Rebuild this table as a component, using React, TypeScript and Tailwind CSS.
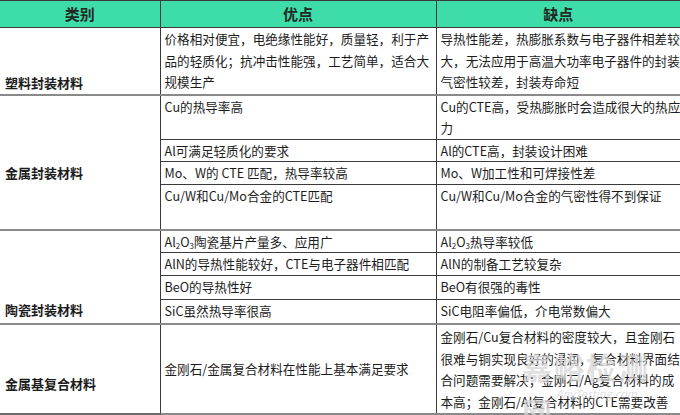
import type { ReactNode } from "react";

const FONT = { fontFamily: '"Noto Sans CJK SC", "Noto Sans", sans-serif' };

type Sub = { h: number; pro: ReactNode[]; con: ReactNode[]; mid?: boolean };
type Group = { label: string; pb: number; last?: boolean; rows: Sub[] };

const A2O3 = (
  <>
    Al<sub className="text-[8px]">2</sub>O<sub className="text-[8px]">3</sub>
  </>
);

const GROUPS: Group[] = [
  {
    label: "塑料封装材料",
    pb: 0,
    rows: [
      {
        h: 67,
        pro: ["价格相对便宜，电绝缘性能好，质量轻，利于产", "品的轻质化；抗冲击性能强，工艺简单，适合大", "规模生产"],
        con: ["导热性能差，热膨胀系数与电子器件相差较", "大，无法应用于高温大功率电子器件的封装", "气密性较差，封装寿命短"],
      },
    ],
  },
  {
    label: "金属封装材料",
    pb: 45,
    rows: [
      { h: 44, pro: ["Cu的热导率高"], con: ["Cu的CTE高，受热膨胀时会造成很大的热应", "力"] },
      { h: 22, pro: ["Al可满足轻质化的要求"], con: ["Al的CTE高，封装设计困难"] },
      { h: 23, pro: ["Mo、W的 CTE 匹配，热导率较高"], con: ["Mo、W加工性和可焊接性差"] },
      { h: 45, pro: ["Cu/W和Cu/Mo合金的CTE匹配"], con: ["Cu/W和Cu/Mo合金的气密性得不到保证"] },
    ],
  },
  {
    label: "陶瓷封装材料",
    pb: 3,
    rows: [
      { h: 22, pro: [<>{A2O3}陶瓷基片产量多、应用广</>], con: [<>{A2O3}热导率较低</>] },
      { h: 22, pro: ["AlN的导热性能较好，CTE与电子器件相匹配"], con: ["AlN的制备工艺较复杂"] },
      { h: 24, pro: ["BeO的导热性好"], con: ["BeO有很强的毒性"] },
      { h: 25, pro: ["SiC虽然热导率很高"], con: ["SiC电阻率偏低，介电常数偏大"] },
    ],
  },
  {
    label: "金属基复合材料",
    pb: 19,
    last: true,
    rows: [
      {
        h: 90,
        mid: true,
        pro: ["金刚石/金属复合材料在性能上基本满足要求"],
        con: ["金刚石/Cu复合材料的密度较大，且金刚石", "很难与铜实现良好的浸润，复合材料界面结", "合问题需要解决；金刚石/Ag复合材料的成", "本高；金刚石/Al复合材料的CTE需要改善"],
      },
    ],
  },
];

function Lines({ items }: { items: ReactNode[] }) {
  return (
    <>
      {items.map((t, i) => (
        <span key={i} className="block whitespace-nowrap">
          {t}
        </span>
      ))}
    </>
  );
}

export default function App() {
  return (
    <div className="relative h-[415px] w-[680px] overflow-hidden bg-white text-[#1c1c1c]" style={FONT}>
      <table className="w-[680px] table-fixed border-collapse text-[12.6px] leading-[21.5px]">
        <colgroup>
          <col className="w-[160px]" />
          <col className="w-[276px]" />
          <col className="w-[244px]" />
        </colgroup>
        <thead>
          <tr className="h-[27px] bg-[#3edca9] text-[15px] font-bold text-[#1e2a24]">
            <th className="border-t border-b border-[#3a3a3a] text-center">类别</th>
            <th className="border-t border-b border-l border-[#3a3a3a] text-center">优点</th>
            <th className="border-t border-b border-l border-[#3a3a3a] text-center">缺点</th>
          </tr>
        </thead>
        <tbody>
          {GROUPS.map(g =>
            g.rows.map((r, i) => {
              const lastRow = i === g.rows.length - 1;
              const rowBorder = lastRow ? "border-b-2 border-b-[#8a8a8a]" : "border-b border-b-[#3a3a3a]";
              const align = r.mid ? "align-middle" : "align-top";
              return (
                <tr key={g.label + i} style={{ height: r.h }}>
                  {i === 0 && (
                    <td
                      rowSpan={g.rows.length}
                      className={
                        "border-b-2 p-0 align-bottom text-[13px] font-bold " +
                        (g.last ? "border-b-[#6a6a6a]" : "border-b-[#8a8a8a]")
                      }
                    >
                      <div className="pl-[5px]" style={{ paddingBottom: g.pb }}>
                        {g.label}
                      </div>
                    </td>
                  )}
                  <td className={"border-l border-l-[#3a3a3a] p-0 pl-[4px] " + align + " " + rowBorder}>
                    <Lines items={r.pro} />
                  </td>
                  <td className={"border-l border-l-[#3a3a3a] p-0 pl-[4px] " + align + " " + rowBorder}>
                    <Lines items={r.con} />
                  </td>
                </tr>
              );
            })
          )}
        </tbody>
      </table>
      {/* watermark */}
      <div className="pointer-events-none absolute left-[522px] top-[344px] text-[30px] font-bold tracking-[2px] text-[#d6d6d6]/75">
        嘉峪检测网
      </div>
      <div className="pointer-events-none absolute left-[556px] top-[385px] text-[11px] italic text-[#cfcfcf]/70">
        AnyTesting.com
      </div>
    </div>
  );
}
